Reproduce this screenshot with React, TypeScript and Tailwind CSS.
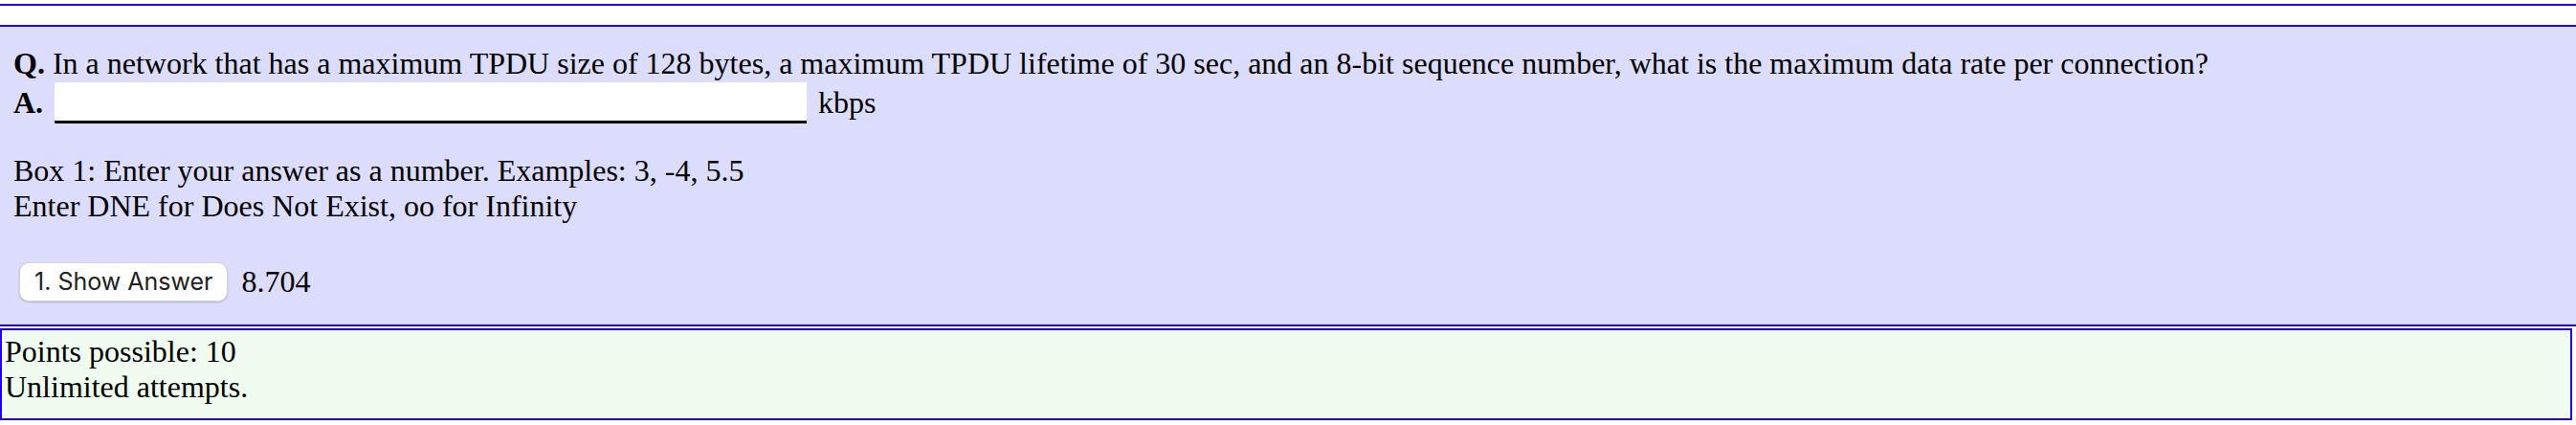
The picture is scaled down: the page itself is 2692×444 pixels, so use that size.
export default function App() {
  return (
    <div className="w-[2692px] bg-white font-['Liberation_Serif',serif] text-[32px] leading-[37px] text-black">
      <div className="h-[4px]" />
      <div className="h-[24px] border-y-2 border-[#1f00f5]" />

      {/* question panel */}
      <div className="border-b-2 border-[#1f00f5] bg-[#dcdcfc] px-[14px] pt-[20px] pb-[24px]">
        <p>
          <b>Q.</b> In a network that has a maximum TPDU size of 128 bytes, a maximum TPDU lifetime of 30 sec, and an
          8-bit sequence number, what is the maximum data rate per connection?
        </p>
        <div className="flex h-[45px] items-center">
          <b>A.</b>
          <input
            type="text"
            className="ml-[12px] h-[43px] w-[786px] border-b-[3px] border-black bg-white outline-none"
          />
          <span className="ml-[12px]">kbps</span>
        </div>
        <p className="mt-[30px]">
          Box 1: Enter your answer as a number. Examples: 3, -4, 5.5
          <br />
          Enter DNE for Does Not Exist, oo for Infinity
        </p>
        <div className="mt-[40px] flex items-center gap-[14px]">
          <button className="ml-[6px] h-[41px] rounded-[10px] border border-[#d4d4d8] bg-white px-[15px] font-['Inter',sans-serif] text-[25px] leading-none text-[#222] shadow-[0_1px_2px_rgba(0,0,0,0.2)]">
            1. Show Answer
          </button>
          <span>8.704</span>
        </div>
      </div>

      {/* points box */}
      <div className="mt-[2px] mr-[4px] h-[96px] border-2 border-[#1f00f5] bg-[#effcef] pl-[3px] pt-[4px]">
        Points possible: 10
        <br />
        Unlimited attempts.
      </div>
    </div>
  );
}
